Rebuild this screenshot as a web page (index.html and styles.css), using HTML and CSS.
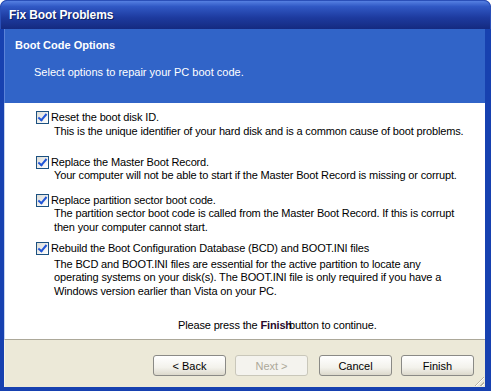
FILE: index.html
```html
<!DOCTYPE html>
<html lang="en">
<head>
  <meta charset="UTF-8" />
  <title>Fix Boot Problems</title>
  <link rel="stylesheet" href="styles.css">
</head>
<body>
  <div class="window">
    <div class="titlebar">Fix Boot Problems</div>

    <div class="frame">
      <div class="header">
        <h1>Boot Code Options</h1>
        <p>Select options to repair your PC boot code.</p>
      </div>

      <div class="content">
        <div class="option">
          <span class="check"></span>
          <div class="text">
            <div class="label">Reset the boot disk ID.</div>
            <div class="desc">This is the unique identifier of your hard disk and is a common cause of boot problems.</div>
          </div>
        </div>

        <div class="option">
          <span class="check"></span>
          <div class="text">
            <div class="label">Replace the Master Boot Record.</div>
            <div class="desc">Your computer will not be able to start if the Master Boot Record is missing or corrupt.</div>
          </div>
        </div>

        <div class="option">
          <span class="check"></span>
          <div class="text">
            <div class="label">Replace partition sector boot code.</div>
            <div class="desc">The partition sector boot code is called from the Master Boot Record. If this is corrupt<br>then your computer cannot start.</div>
          </div>
        </div>

        <div class="option">
          <span class="check"></span>
          <div class="text">
            <div class="label">Rebuild the Boot Configuration Database (BCD) and BOOT.INI files</div>
            <div class="desc">The BCD and BOOT.INI files are essential for the active partition to locate any<br>operating systems on your disk(s). The BOOT.INI file is only required if you have a<br>Windows version earlier than Vista on your PC.</div>
          </div>
        </div>

        <div class="note">Please press the <b class="finish">Finish</b>button to continue.</div>
      </div>

      <div class="footer">
        <button class="btn">&lt; Back</button>
        <button class="btn" disabled>Next &gt;</button>
        <button class="btn cancel">Cancel</button>
        <button class="btn">Finish</button>
        <span class="grip"></span>
      </div>
    </div>
  </div>
</body>
</html>
```

FILE: styles.css
```css
* {
  margin: 0;
  padding: 0;
  box-sizing: border-box;
}

body {
  width: 491px;
  height: 391px;
  background: #ffffff;
  font-family: 'Liberation Sans', Arial, sans-serif;
  font-size: 11px;
  color: #000;
  overflow: hidden;
}

.window {
  height: 391px;
  display: flex;
  flex-direction: column;
  background: #0a2d9c;
  border-radius: 7px 7px 0 0;
  overflow: hidden;
}

.titlebar {
  height: 29px;
  flex: none;
  padding: 0 8px;
  display: flex;
  align-items: center;
  color: #fff;
  font-weight: bold;
  font-size: 12px;
  letter-spacing: -0.1px;
  background: linear-gradient(#5580e2 0%, #3058c4 20%, #1d3a9e 60%, #142a80 100%);
  border-radius: 7px 7px 0 0;
  border: 1px solid #2a4fb8;
  border-bottom: none;
  text-shadow: 1px 1px 0 #0a1e60;
}

.frame {
  flex: 1;
  display: flex;
  flex-direction: column;
  padding: 0 6px 4px 4px;
  background: #1741b0;
}

.header {
  height: 74px;
  flex: none;
  background: #3164c8;
  color: #fff;
  padding: 10px 0 0 10px;
  border-left: 1px solid #5a82d8;
}

.header h1 {
  font-size: 11px;
  font-weight: bold;
  line-height: 13px;
}

.header p {
  margin: 14px 0 0 19px;
  line-height: 13px;
}

.content {
  height: 237px;
  flex: none;
  background: #fff;
  padding: 7px 0 0 31px;
  border-left: 1px solid #c4d2ee;
  border-bottom: 1px solid #aca899;
  letter-spacing: -0.15px;
}

.option {
  display: flex;
  gap: 2px;
}

.option:nth-child(2) {
  margin-top: 16.5px;
}

.option:nth-child(3) {
  margin-top: 10.5px;
}

.option:nth-child(4) {
  margin-top: 6.5px;
}

.check {
  width: 13px;
  height: 13px;
  flex: none;
  margin-top: 1px;
  border: 1px solid #1c5180;
  background: linear-gradient(135deg, #dcdcd7, #fff);
  position: relative;
}

.check::after {
  content: '';
  position: absolute;
  left: 3px;
  top: 0;
  width: 3px;
  height: 7px;
  border: solid #2155d6;
  border-width: 0 2px 2px 0;
  transform: rotate(40deg);
}

.label {
  line-height: 14px;
}

.desc {
  padding-left: 3px;
  line-height: 13.5px;
}

.option:first-child .desc {
  margin-top: 1px;
}

.option:nth-child(4) .desc {
  margin-top: 3px;
}

.note {
  margin-top: 19.5px;
  padding-left: 142px;
  line-height: 14px;
}

.finish {
  color: #2b0a2b;
  margin-right: -3px;
}

.footer {
  flex: 1;
  background: #ece9d8;
  display: flex;
  align-items: flex-start;
  justify-content: flex-end;
  padding: 15px 11px 0 0;
  gap: 9px;
  position: relative;
  border-left: 1px solid #f4f2e8;
}

.btn {
  width: 73px;
  height: 21px;
  font-family: inherit;
  font-size: 11px;
  color: #000;
  border: 1px solid #8a8a86;
  border-radius: 3px;
  background: linear-gradient(#ffffff, #f3f2ec 60%, #dcd9cc);
}

.btn:disabled {
  color: #aca899;
  border-color: #c9c7ba;
  background: #f4f3ee;
}

.cancel {
  margin-left: 2px;
}

.grip {
  position: absolute;
  right: 1px;
  bottom: 1px;
  width: 12px;
  height: 12px;
  background: repeating-linear-gradient(135deg, transparent 0 2px, #b8b4a2 2px 3px, #fff 3px 4px);
  clip-path: polygon(100% 0, 100% 100%, 0 100%);
}
```
